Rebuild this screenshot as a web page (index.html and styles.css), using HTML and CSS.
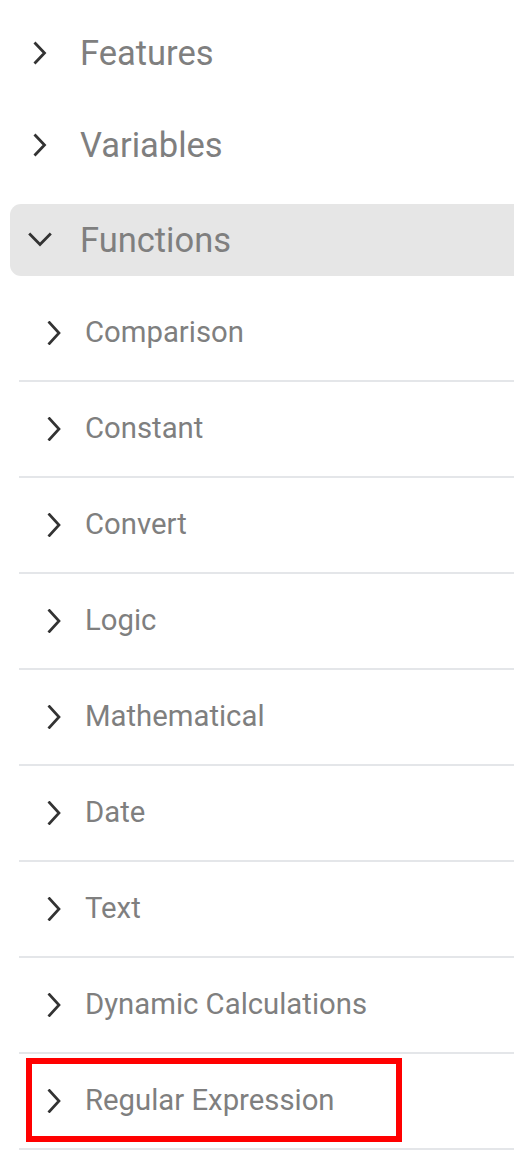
FILE: index.html
```html
<!DOCTYPE html>
<html>
<head>
<meta charset="utf-8">
<link rel="stylesheet" href="styles.css">
</head>
<body>
<div class="tree">
  <div class="top-item">
    <span class="icon"><svg viewBox="0 0 24 24" width="24" height="24"><polyline points="6.5,1.5 16.5,12 6.5,22.5" fill="none" stroke="#333" stroke-width="2.8"/></svg></span>
    <span class="top-label">Features</span>
  </div>
  <div class="top-item">
    <span class="icon"><svg viewBox="0 0 24 24" width="24" height="24"><polyline points="6.5,1.5 16.5,12 6.5,22.5" fill="none" stroke="#333" stroke-width="2.8"/></svg></span>
    <span class="top-label">Variables</span>
  </div>
  <div class="top-item open">
    <span class="icon"><svg viewBox="0 0 24 24" width="24" height="24"><polyline points="1.2,5.5 12,16.5 22.8,5.5" fill="none" stroke="#333" stroke-width="2.8"/></svg></span>
    <span class="top-label">Functions</span>
  </div>
  <div class="sub-list">
    <div class="sub-item"><span class="sub-icon"><svg viewBox="0 0 24 24" width="24" height="24"><polyline points="6.5,0.5 17,12 6.5,23.5" fill="none" stroke="#333" stroke-width="2.7"/></svg></span><span class="sub-label">Comparison</span></div>
    <div class="sub-item"><span class="sub-icon"><svg viewBox="0 0 24 24" width="24" height="24"><polyline points="6.5,0.5 17,12 6.5,23.5" fill="none" stroke="#333" stroke-width="2.7"/></svg></span><span class="sub-label">Constant</span></div>
    <div class="sub-item"><span class="sub-icon"><svg viewBox="0 0 24 24" width="24" height="24"><polyline points="6.5,0.5 17,12 6.5,23.5" fill="none" stroke="#333" stroke-width="2.7"/></svg></span><span class="sub-label">Convert</span></div>
    <div class="sub-item"><span class="sub-icon"><svg viewBox="0 0 24 24" width="24" height="24"><polyline points="6.5,0.5 17,12 6.5,23.5" fill="none" stroke="#333" stroke-width="2.7"/></svg></span><span class="sub-label">Logic</span></div>
    <div class="sub-item"><span class="sub-icon"><svg viewBox="0 0 24 24" width="24" height="24"><polyline points="6.5,0.5 17,12 6.5,23.5" fill="none" stroke="#333" stroke-width="2.7"/></svg></span><span class="sub-label">Mathematical</span></div>
    <div class="sub-item"><span class="sub-icon"><svg viewBox="0 0 24 24" width="24" height="24"><polyline points="6.5,0.5 17,12 6.5,23.5" fill="none" stroke="#333" stroke-width="2.7"/></svg></span><span class="sub-label">Date</span></div>
    <div class="sub-item"><span class="sub-icon"><svg viewBox="0 0 24 24" width="24" height="24"><polyline points="6.5,0.5 17,12 6.5,23.5" fill="none" stroke="#333" stroke-width="2.7"/></svg></span><span class="sub-label">Text</span></div>
    <div class="sub-item"><span class="sub-icon"><svg viewBox="0 0 24 24" width="24" height="24"><polyline points="6.5,0.5 17,12 6.5,23.5" fill="none" stroke="#333" stroke-width="2.7"/></svg></span><span class="sub-label">Dynamic Calculations</span></div>
    <div class="sub-item highlighted"><span class="sub-icon"><svg viewBox="0 0 24 24" width="24" height="24"><polyline points="6.5,0.5 17,12 6.5,23.5" fill="none" stroke="#333" stroke-width="2.7"/></svg></span><span class="sub-label">Regular Expression</span><span class="highlight-box"></span></div>
  </div>
</div>
</body>
</html>
```
FILE: styles.css
```css
html, body {
  margin: 0;
  padding: 0;
  background: #fff;
}
body {
  font-family: Roboto, "Liberation Sans", sans-serif;
  overflow: hidden;
}
.tree {
  padding-top: 17px;
}
.top-item {
  display: flex;
  align-items: center;
  height: 72px;
  margin: 0 0 20px 10px;
  padding-left: 18px;
  border-radius: 11px 0 0 11px;
}
.top-item.open {
  margin-top: 23px;
  margin-bottom: 10px;
  background: #e6e6e6;
}
.icon {
  display: flex;
  width: 24px;
  height: 24px;
  flex: none;
}
.top-label {
  margin-left: 28px;
  font-size: 34.5px;
  color: #7f7f7f;
  line-height: 1;
}
.sub-list {
  margin-left: 19px;
}
.sub-item {
  position: relative;
  display: flex;
  align-items: center;
  height: 94px;
  padding-left: 23px;
  border-bottom: 2px solid #e4e6e9;
}
.sub-icon {
  display: flex;
  width: 24px;
  height: 24px;
  flex: none;
}
.sub-label {
  margin-left: 19px;
  font-size: 29.3px;
  color: #7f7f7f;
  line-height: 1;
}
.highlight-box {
  position: absolute;
  left: 7px;
  top: 4px;
  width: 364px;
  height: 72px;
  border: 6px solid #ff0000;
}
```
